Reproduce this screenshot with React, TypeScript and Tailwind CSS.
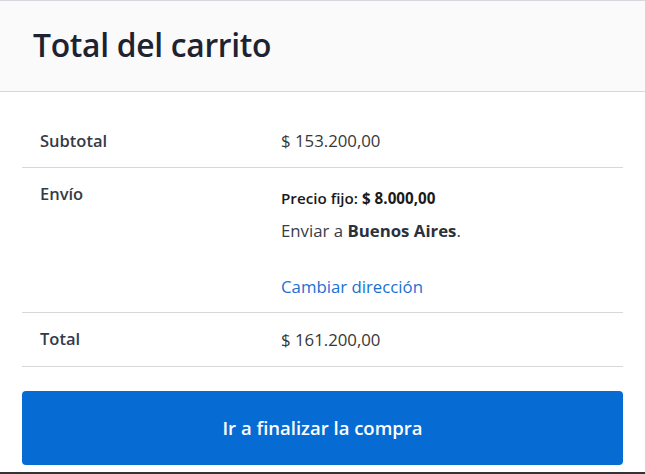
import React from "react";

export default function App() {
  const font = { fontFamily: '"Open Sans", "Noto Sans", Arial, sans-serif' };
  return (
    <div className="relative w-[645px] h-[474px] bg-white overflow-hidden" style={font}>
      <div className="border-t border-[#d5d8dd]">
        <div className="h-[91px] bg-[#fafafa] border-b border-[#d5d8dd] flex items-center px-[33px]">
          <h2 className="text-[31.8px] font-semibold text-[#1d2331] tracking-[-0.3px] leading-none -mt-[2px]">
            Total del carrito
          </h2>
        </div>
        <div className="px-[22px] pt-[23px]">
          <div className="flex h-[53px] items-center border-b border-[#d8d8d8]">
            <div className="w-[259px] pl-[18px] text-[16.5px] font-semibold text-[#333b48]">Subtotal</div>
            <div className="text-[16.8px] text-[#373737]">$ 153.200,00</div>
          </div>
          <div className="flex border-b border-[#d8d8d8] pt-[14px] pb-[13px]">
            <div className="w-[259px] pl-[18px] text-[16.5px] font-semibold text-[#333b48] leading-[24px]">Envío</div>
            <div className="flex flex-col">
              <div className="mt-[4px] leading-[24px] text-[15.2px] font-semibold text-[#1a1a1a]">
                Precio fijo: <span className="font-bold">$ 8.000,00</span>
              </div>
              <div className="mt-[9px] leading-[24px] text-[16.8px] text-[#373e4a]">
                Enviar a <span className="font-bold text-[#2a313d]">Buenos Aires</span>.
              </div>
              <div className="mt-[32px] leading-[24px] text-[16.8px] text-[#1a70d3]">Cambiar dirección</div>
            </div>
          </div>
          <div className="flex h-[54px] items-center border-b border-[#d8d8d8]">
            <div className="w-[259px] pl-[18px] text-[16.5px] font-semibold text-[#333b48]">Total</div>
            <div className="text-[16.8px] text-[#373737]">$ 161.200,00</div>
          </div>
          <button className="mt-[24px] w-full h-[74px] rounded-[4px] bg-[#066cd4] text-white text-[18.5px] font-semibold flex items-center justify-center">
            Ir a finalizar la compra
          </button>
        </div>
      </div>
      <div className="absolute left-0 right-0 bottom-0 h-[2px] bg-[#333333]" />
    </div>
  );
}
